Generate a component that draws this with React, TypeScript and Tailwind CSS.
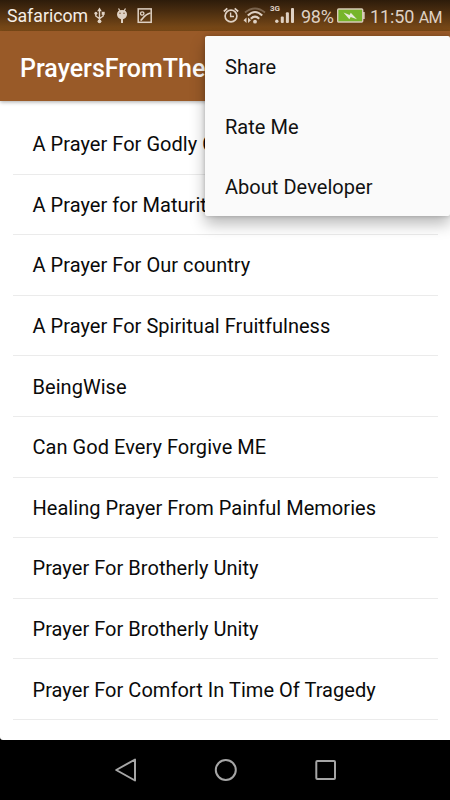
import React from 'react';

const prayers = [
  'A Prayer For Godly C',
  'A Prayer for Maturit',
  'A Prayer For Our country',
  'A Prayer For Spiritual Fruitfulness',
  'BeingWise',
  'Can God Every Forgive ME',
  'Healing Prayer From Painful Memories',
  'Prayer For Brotherly Unity',
  'Prayer For Brotherly Unity',
  'Prayer For Comfort In Time Of Tragedy',
];

const menuItems = ['Share', 'Rate Me', 'About Developer'];

export default function App() {
  return (
    <div className="relative flex h-[800px] w-[450px] flex-col overflow-hidden bg-black font-['Roboto',sans-serif]">
      <StatusBar />

      {/* App bar */}
      <header className="relative z-10 flex h-[70px] shrink-0 items-center bg-[#995a28] pt-[5px] pl-5 shadow-[0_1px_4px_rgba(0,0,0,0.35)]">
        <h1 className="text-[25px] leading-none font-medium whitespace-nowrap text-white">
          PrayersFromThe
        </h1>
      </header>

      {/* Prayer list */}
      <main className="h-[639px] shrink-0 overflow-hidden rounded-bl-[3px] bg-white px-[12.5px] pt-[13px]">
        <ul>
          {prayers.map((title, index) => (
            <li
              key={index}
              className="flex h-[60.6px] items-center border-b border-[#ebebeb] pt-px pl-5 text-[20px] tracking-[0.04px] whitespace-nowrap text-[#0a0a0a]"
            >
              {title}
            </li>
          ))}
        </ul>
      </main>

      <NavigationBar />
      <OverflowMenu />
    </div>
  );
}

function StatusBar() {
  return (
    <div className="flex h-[31px] shrink-0 items-center bg-linear-to-b from-[#2d1c0a] to-[#804d18] text-[#dfd1c3]">
      <span className="ml-[7px] w-[87px] pt-[2px] text-[17.7px] leading-none text-[#f5eee8]">Safaricom</span>
      <UsbIcon />
      <AndroidIcon />
      <PictureIcon />
      <div className="flex-1" />
      <AlarmIcon />
      <WifiIcon />
      <SignalIcon />
      <span className="ml-[5px] w-[36px] pt-[3px] text-[18px] leading-none tracking-[-0.3px]">98%</span>
      <BatteryIcon />
      <span className="ml-[5px] w-[80px] pt-[3px] text-[18px] leading-none tracking-[-0.1px] whitespace-nowrap">
        11:50 <span className="text-[16px] tracking-[-0.6px]">AM</span>
      </span>
    </div>
  );
}

function UsbIcon() {
  return (
    <svg width="12" height="31" viewBox="0 0 12 31" fill="none" stroke="currentColor" strokeWidth="1.4" aria-hidden="true">
      <path d="M5.5 10v11M1.8 13v3l3.7 2.7M9.2 13v3L5.5 18.7" />
      <path d="m5.5 7.5 2.3 3.7H3.200z" fill="currentColor" stroke="none" />
      <circle cx="1.9" cy="13.300" r="1.500" fill="currentColor" stroke="none" />
      <path d="M7.700 11.800h3v3h-3z" fill="currentColor" stroke="none" />
      <circle cx="5.5" cy="21.300" r="1.900" fill="currentColor" stroke="none" />
    </svg>
  );
}

function AndroidIcon() {
  return (
    <svg width="12" height="31" viewBox="0 0 12 31" className="ml-[10px]" aria-hidden="true">
      <path d="M2.500 8.500 4 11M9.500 8.500 8 11" stroke="currentColor" strokeWidth="1.300" />
      <path d="M1 14.200C1 11.500 3 10 6 10s5 1.500 5 4.200c0 2.600-1.600 4.300-4 5.100V23H5v-3.700c-2.400-.8-4-2.500-4-5.100z" fill="currentColor" />
      <circle cx="4" cy="13.200" r=".7" fill="#6b4320" />
      <circle cx="8" cy="13.200" r=".7" fill="#6b4320" />
    </svg>
  );
}

function PictureIcon() {
  return (
    <svg width="15" height="31" viewBox="0 0 15 31" fill="none" stroke="currentColor" className="ml-[9px]" aria-hidden="true">
      <rect x="1.200" y="8.900" width="13" height="13.400" strokeWidth="1.500" />
      <circle cx="5.200" cy="13.500" r="1.700" strokeWidth="1.300" />
      <path d="M3.500 20.500C6 19.500 6.500 14.500 13.500 13" strokeWidth="1.600" />
    </svg>
  );
}

function AlarmIcon() {
  return (
    <svg width="16" height="31" viewBox="0 0 16 31" fill="none" stroke="currentColor" aria-hidden="true">
      <circle cx="8" cy="16" r="5.900" strokeWidth="1.700" />
      <path d="M.8 11.500 4.300 8.300M15.200 11.500 11.700 8.300" strokeWidth="1.700" />
      <path d="M7.600 12.500v4H11" strokeWidth="1.400" />
    </svg>
  );
}

function WifiIcon() {
  return (
    <svg width="24" height="31" viewBox="0 0 24 31" fill="none" stroke="currentColor" className="ml-[4px]" aria-hidden="true">
      <path d="M2 12.500Q12 4.500 22 12.500" strokeWidth="1.800" opacity="0.35" />
      <path d="M4.800 15.500Q12 8.500 19.200 15.500" strokeWidth="2.100" />
      <path d="M7.800 18.800Q12 14.500 16.200 18.800" strokeWidth="2.100" />
      <circle cx="12" cy="21.700" r="1.900" fill="currentColor" stroke="none" />
      <path d="M3.500 17.500v5.500L.5 20.300zM5 17.500v5.500l3-2.700z" fill="currentColor" stroke="none" />
    </svg>
  );
}

function SignalIcon() {
  return (
    <div className="relative ml-[2px] h-[31px] w-[27px]">
      <span className="absolute top-[5px] left-px text-[8px] leading-none font-bold">3G</span>
      <svg width="27" height="31" viewBox="0 0 27 31" fill="currentColor" aria-hidden="true">
        <circle cx="7.800" cy="21.300" r="1.700" />
        <rect x="11.800" y="16.500" width="3" height="6.500" rx="1" />
        <rect x="16.900" y="12.300" width="3" height="10.700" rx="1" />
        <rect x="22" y="8" width="3" height="15" rx="1" />
      </svg>
    </div>
  );
}

function BatteryIcon() {
  return (
    <svg width="28" height="31" viewBox="0 0 28 31" aria-hidden="true">
      <rect x=".7" y="9" width="25" height="13" rx="1" fill="#76b52b" stroke="#d8cab8" strokeWidth="1.400" />
      <path d="M26 12h1.700v7H26z" fill="#d8cab8" />
      <path d="m6.500 12.500 6 2.500 1.300-2.300 6.200 6.600-6.300-2.300-1.400 2.300z" fill="#e8eadb" />
    </svg>
  );
}

function OverflowMenu() {
  return (
    <div
      role="menu"
      className="absolute top-[36px] left-[205px] z-20 h-[180px] w-[245px] rounded-[2px] bg-[#fafafa] shadow-[0_8px_15px_rgba(0,0,0,0.28),0_0_4px_rgba(0,0,0,0.2)]"
    >
      {menuItems.map((item) => (
        <div key={item} role="menuitem" className="flex h-[60px] items-center pt-[2px] pl-5 text-[20px] tracking-[0.04px] text-[#111111]">
          {item}
        </div>
      ))}
    </div>
  );
}

function NavigationBar() {
  return (
    <nav className="flex h-[60px] shrink-0 items-center justify-center gap-[76px] bg-black">
      <svg width="24" height="24" viewBox="0 0 24 24" fill="none" stroke="#a6a6a6" strokeWidth="2" strokeLinejoin="round" aria-label="Back">
        <path d="M22 1.500v21L3.200 12z" />
      </svg>
      <svg width="24" height="24" viewBox="0 0 24 24" fill="none" stroke="#a6a6a6" strokeWidth="2" aria-label="Home">
        <circle cx="12.800" cy="12" r="10" />
      </svg>
      <svg width="24" height="24" viewBox="0 0 24 24" fill="none" stroke="#a6a6a6" strokeWidth="2" aria-label="Recent apps">
        <rect x="3.300" y="3" width="18.700" height="18" rx="1" />
      </svg>
    </nav>
  );
}
